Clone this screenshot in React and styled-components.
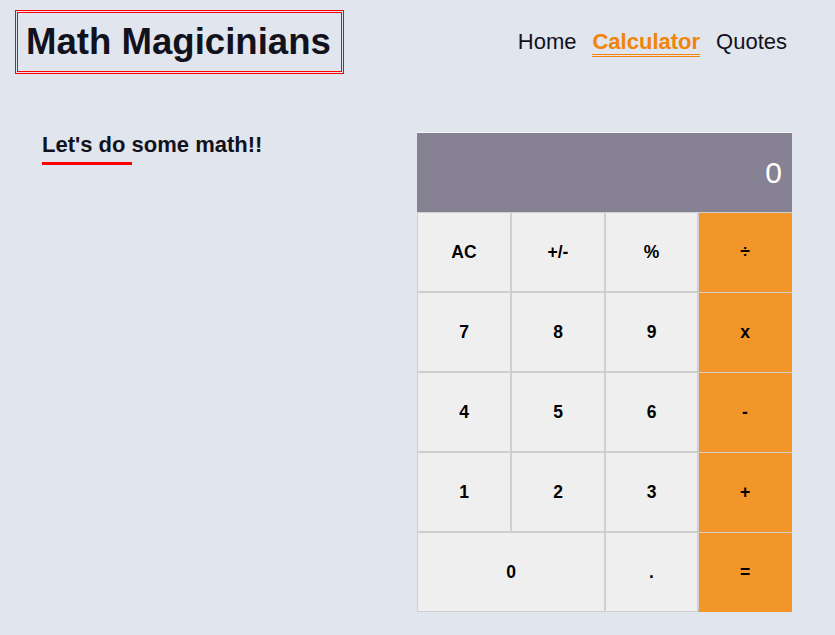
import React from 'react';
import styled, { createGlobalStyle } from 'styled-components';

const colors = {
  page: '#e1e5ee',
  ink: '#12121c',
  orange: '#f2962a',
  navOrange: '#f0840c',
  screen: '#868293',
  key: '#efefef',
  keyBorder: '#cfcfcf',
  red: '#ff0000',
};

const GlobalStyle = createGlobalStyle`
  html, body {
    margin: 0;
    padding: 0;
    background: ${colors.page};
    font-family: 'Liberation Sans', Arial, sans-serif;
    color: ${colors.ink};
  }
`;

const Page = styled.div`
  min-height: 635px;
  background: ${colors.page};
`;

const Header = styled.header`
  display: flex;
  justify-content: space-between;
  align-items: center;
  padding: 10px 48px 0 15px;
`;

const Logo = styled.h1`
  margin: 0;
  padding: 8px 10px 8px 8px;
  border: 3px double ${colors.red};
  font-size: 36.6px;
  line-height: 42px;
  font-weight: 700;
  color: ${colors.ink};
`;

const Nav = styled.nav`
  display: flex;
  align-items: center;
  gap: 16px;
  margin-top: 1px;
`;

const NavLink = styled.a`
  font-size: 22px;
  line-height: 25px;
  color: ${(p) => (p.active ? colors.navOrange : colors.ink)};
  font-weight: ${(p) => (p.active ? 700 : 400)};
  border-bottom: 3px double ${(p) => (p.active ? colors.navOrange : 'transparent')};
  text-decoration: none;
  cursor: pointer;
`;

const Main = styled.main`
  display: flex;
  justify-content: space-between;
  align-items: flex-start;
  padding: 58px 43px 0 42px;
`;

const Intro = styled.h2`
  margin: 0;
  font-size: 22px;
  line-height: 25px;
  font-weight: 700;

  &::after {
    content: '';
    display: block;
    width: 90px;
    height: 3px;
    margin-top: 5px;
    background: ${colors.red};
  }
`;

const Calculator = styled.div`
  display: grid;
  grid-template-columns: 94px 94px 93px 94px;
  grid-auto-rows: 80px;
  width: 375px;
`;

const Screen = styled.div`
  grid-column: 1 / -1;
  display: flex;
  align-items: center;
  justify-content: flex-end;
  padding-right: 10px;
  background: ${colors.screen};
  border-top: 1px solid #f6f6f8;
  color: #ffffff;
  font-size: 30px;
  box-sizing: border-box;
`;

const Key = styled.button`
  grid-column: span ${(p) => p.span || 1};
  margin: 0;
  padding: 0;
  font-family: 'Liberation Sans', Arial, sans-serif;
  font-size: 17.5px;
  font-weight: 700;
  color: #000;
  background: ${(p) => (p.op ? colors.orange : colors.key)};
  border: 1px solid ${colors.keyBorder};
  border-right-color: ${(p) => (p.op ? colors.orange : colors.keyBorder)};
  border-bottom-color: ${(p) => (p.op ? colors.orange : colors.keyBorder)};
  box-sizing: border-box;
  cursor: pointer;
`;

const keys = [
  { label: 'AC' },
  { label: '+/-' },
  { label: '%' },
  { label: '÷', op: true },
  { label: '7' },
  { label: '8' },
  { label: '9' },
  { label: 'x', op: true },
  { label: '4' },
  { label: '5' },
  { label: '6' },
  { label: '-', op: true },
  { label: '1' },
  { label: '2' },
  { label: '3' },
  { label: '+', op: true },
  { label: '0', span: 2 },
  { label: '.' },
  { label: '=', op: true },
];

export default function App() {
  return (
    <Page>
      <GlobalStyle />
      <Header>
        <Logo>Math Magicinians</Logo>
        <Nav>
          <NavLink>Home</NavLink>
          <NavLink active>Calculator</NavLink>
          <NavLink>Quotes</NavLink>
        </Nav>
      </Header>
      <Main>
        <Intro>Let's do some math!!</Intro>
        <Calculator>
          <Screen>0</Screen>
          {keys.map((k) => (
            <Key key={k.label} op={k.op} span={k.span}>
              {k.label}
            </Key>
          ))}
        </Calculator>
      </Main>
    </Page>
  );
}
